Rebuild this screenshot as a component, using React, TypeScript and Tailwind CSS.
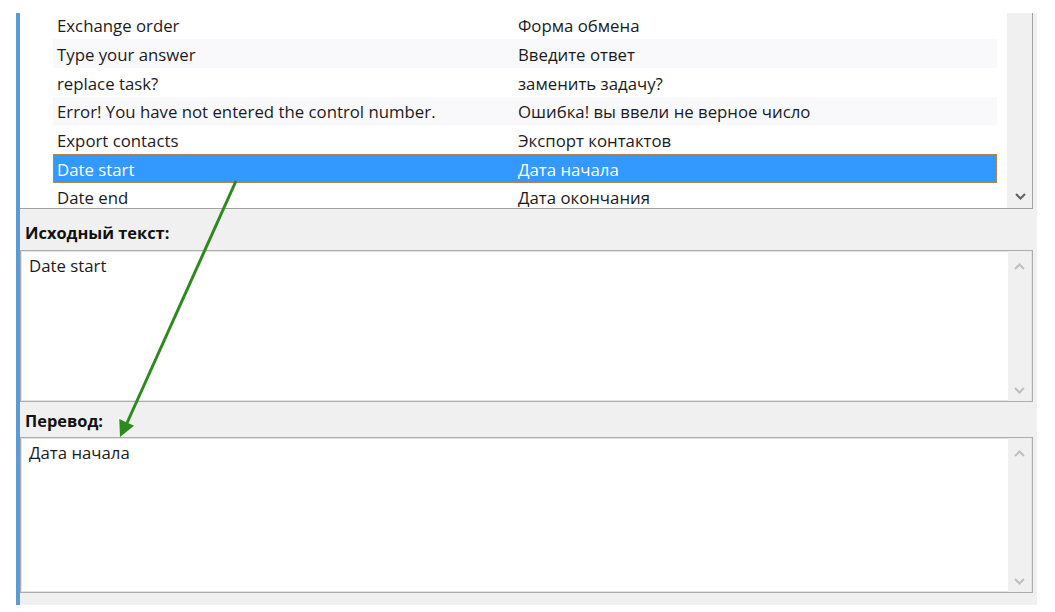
import React from "react";

const rows: [string, string][] = [
  ["Exchange order", "Форма обмена"],
  ["Type your answer", "Введите ответ"],
  ["replace task?", "заменить задачу?"],
  ["Error! You have not entered the control number.", "Ошибка! вы ввели не верное число"],
  ["Export contacts", "Экспорт контактов"],
  ["Date start", "Дата начала"],
  ["Date end", "Дата окончания"],
];

function Chevron({ up, color }: { up?: boolean; color: string }) {
  return (
    <svg width="11" height="7" viewBox="0 0 11 7" fill="none">
      <path
        d={up ? "M1 6 L5.5 1.5 L10 6" : "M1 1 L5.5 5.5 L10 1"}
        stroke={color}
        strokeWidth="2"
      />
    </svg>
  );
}

function TextBox({ text, h }: { text: string; h: string }) {
  return (
    <div className={`${h} w-[1013px] border border-[#adadad] bg-white flex`}>
      <div className="flex-1 border-l border-t border-b border-[#e3e3e3] pl-[7px] pt-[2px] text-[16.8px] leading-[24px] text-[#1b1b1b]">
        {text}
      </div>
      <div className="w-[24px] bg-[#f0f0f0] border-r border-[#e3e3e3] flex flex-col items-center justify-between pt-[12px] pb-[7px]">
        <Chevron up color="#bfbfbf" />
        <Chevron color="#bfbfbf" />
      </div>
    </div>
  );
}

export default function App() {
  return (
    <div
      className="relative w-[1055px] h-[612px] bg-white overflow-hidden"
      style={{ fontFamily: '"Open Sans", "Noto Sans", sans-serif' }}
    >
      <div className="pt-[13px] pl-[16px] flex">
        <div className="w-[4px] h-[592px] bg-[#5b9bd5]" />
        <div className="w-[1017px] h-[592px] bg-[#f0f0f0] flex flex-col">
          {/* list */}
          <div className="h-[196px] w-[1013px] flex border-b border-r border-[#a0a0a0] bg-white overflow-hidden">
            <div className="w-[987px] pl-[33px] pr-[10px] overflow-hidden">
              <div className="mt-[-2.4px]">
                {rows.map(([a, b], i) => {
                  const sel = i === 5;
                  const alt = i % 2 === 1;
                  return (
                    <div
                      key={i}
                      className={`h-[28.7px] flex items-center text-[16.8px] pt-[2px] ${
                        sel
                          ? "bg-[#3399ff] text-white outline-1 outline-dotted outline-[#b98a52] -outline-offset-1"
                          : alt
                          ? "bg-[#f9f9fc] text-[#1b1b1b]"
                          : "text-[#1b1b1b]"
                      }`}
                    >
                      <div className="w-[465px] pl-[4px] whitespace-nowrap">{a}</div>
                      <div className="whitespace-nowrap">{b}</div>
                    </div>
                  );
                })}
              </div>
            </div>
            <div className="w-[25px] bg-[#f0f0f0] flex flex-col items-center justify-end pb-[8px] pl-[1px]">
              <Chevron color="#606060" />
            </div>
          </div>
          {/* label 1 */}
          <div className="h-[41px] pl-[5px] pt-[12px] text-[16.4px] font-bold text-[#111] leading-[24px]">
            Исходный текст:
          </div>
          <TextBox text="Date start" h="h-[152px]" />
          <div className="h-[35px] pl-[5px] pt-[7px] text-[16.4px] font-bold text-[#111] leading-[24px]">
            Перевод:
          </div>
          <TextBox text="Дата начала" h="h-[156px]" />
        </div>
      </div>

      {/* green arrow */}
      <svg
        className="absolute left-0 top-0 pointer-events-none"
        width="1055"
        height="612"
        viewBox="0 0 1055 612"
      >
        <line x1="236" y1="181" x2="127" y2="423" stroke="#2e8a1e" strokeWidth="3" />
        <polygon points="120,437 134,425.7 119.3,419.1" fill="#2e8a1e" />
      </svg>
    </div>
  );
}
